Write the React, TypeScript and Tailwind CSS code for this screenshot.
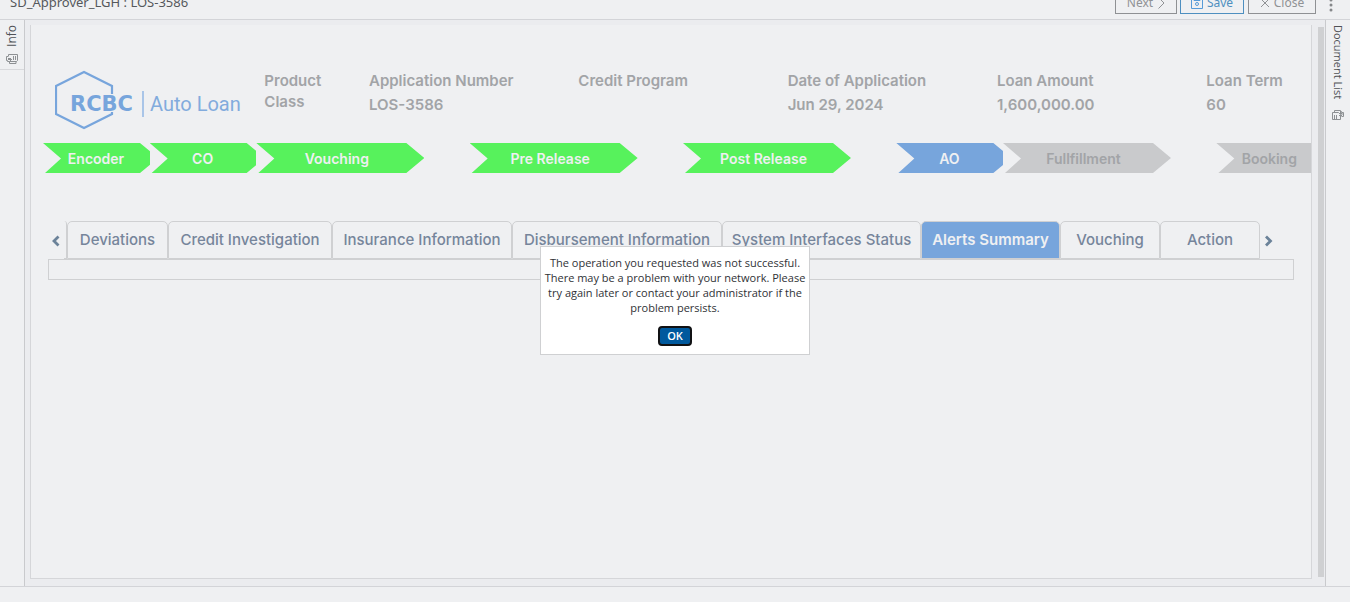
import type { ReactNode } from 'react';

type Tone = 'done' | 'current' | 'pending';

const stages: { label: string; tone: Tone; wide?: boolean }[] = [
  { label: 'Encoder', tone: 'done' },
  { label: 'CO', tone: 'done' },
  { label: 'Vouching', tone: 'done', wide: true },
  { label: 'Pre Release', tone: 'done', wide: true },
  { label: 'Post Release', tone: 'done', wide: true },
  { label: 'AO', tone: 'current' },
  { label: 'Fullfillment', tone: 'pending', wide: true },
  { label: 'Booking', tone: 'pending' },
];

const toneClass: Record<Tone, string> = {
  done: 'bg-[#57f25c] text-[#eff0f2]',
  current: 'bg-[#77a5dc] text-[#eff0f2]',
  pending: 'bg-[#c9cacc] text-[#a2a4a7]',
};

const tabs = [
  { label: 'Deviations', width: 'w-[101px]' },
  { label: 'Credit Investigation', width: 'w-[164px]' },
  { label: 'Insurance Information', width: 'w-[180px]' },
  { label: 'Disbursement Information', width: 'w-[210px]' },
  { label: 'System Interfaces Status', width: 'w-[199px]' },
  { label: 'Alerts Summary', width: 'w-[139px]', active: true },
  { label: 'Vouching', width: 'w-[100px]' },
  { label: 'Action', width: 'w-[100px]' },
];

const fields = [
  { label: 'Product Class', value: '', span: 'col-span-1' },
  { label: 'Application Number', value: 'LOS-3586', span: 'col-span-2' },
  { label: 'Credit Program', value: '', span: 'col-span-2' },
  { label: 'Date of Application', value: 'Jun 29, 2024', span: 'col-span-2' },
  { label: 'Loan Amount', value: '1,600,000.00', span: 'col-span-2' },
  { label: 'Loan Term', value: '60', span: 'col-span-1' },
];

function Logo() {
  return (
    <svg width="188" height="60" viewBox="0 0 188 60" role="img" aria-label="RCBC Auto Loan" className="block">
      <path
        d="M57 24V16L29 2L1 16V44L29 58L57 44V42"
        fill="none"
        stroke="#77a5dc"
        strokeWidth="2.2"
      />
      <text x="15" y="41" fontFamily="DejaVu Sans, sans-serif" fontWeight="700" fontSize="21" fill="#77a5dc">RCBC</text>
      <path d="M88 21V47" stroke="#a9c5e8" strokeWidth="2" />
      <text x="95" y="41" fontFamily="Roboto, sans-serif" fontSize="20" fill="#82abdd">Auto Loan</text>
    </svg>
  );
}

function InfoIcon() {
  return (
    <svg width="12" height="10" viewBox="0 0 12 10" fill="none" stroke="#8d9093" className="block">
      <path d="M2.5 2V.5h9v6l-1 1h-7M2.500 2.500h-2v4h1v1h2v2h6.500v-2" />
      <path d="M2 4.500h3M2 5.500h4M7.500 2v4M9.500 2v4M4.500 5v2" />
    </svg>
  );
}

function DocumentIcon() {
  return (
    <svg width="12" height="10" viewBox="0 0 12 10" fill="none" stroke="#8d9093" className="block">
      <path d="M2.5 2.500V.5h6v1h1v1h2v4h-2M.5 2.500h6l2 2v5h-8z" />
      <path d="M2.500 5v4M4.500 5v4M8.500 1v3h3M7 3.500h3M7 5.500h3" />
    </svg>
  );
}

function Arrow({ d, label }: { d: string; label: string }) {
  return (
    <button type="button" aria-label={label} className="flex h-10 w-4 items-center justify-center">
      <svg width="10" height="12" viewBox="0 0 10 12" fill="none" stroke="#6b8299" strokeWidth="2.8">
        <path d={d} />
      </svg>
    </button>
  );
}

function HeaderButton({ children, className }: { children: ReactNode; className: string }) {
  return (
    <button type="button" className={`flex h-[22px] shrink-0 items-center justify-center gap-1 border text-xs ${className}`}>
      {children}
    </button>
  );
}

export default function App() {
  return (
    <div className="flex min-h-screen flex-col overflow-hidden bg-[#eff0f2] font-['Open_Sans',sans-serif]">
      <header className="flex h-5 items-end border-b border-[#d3d4d8] pl-[10px] font-['Noto_Sans',sans-serif]">
        <h1 className="flex-1 pb-2 text-[13px] leading-[18px] text-[#55585c]">SD_Approver_LGH : LOS-3586</h1>
        <div className="flex items-end pb-[5px]">
          <HeaderButton className="mr-[3px] w-[62px] border-[#8f9194] text-[#909295]">
            Next
            <svg width="8" height="12" viewBox="0 0 8 12" fill="none" stroke="currentColor"><path d="M1.5 0.500L7 6L1.500 11.500" /></svg>
          </HeaderButton>
          <HeaderButton className="mr-1 w-16 border-[#4e8fc0] text-[#4e8fc0]">
            <svg width="12" height="12" viewBox="0 0 12 12" fill="none" stroke="#569bd8">
              <path d="M.5 .5h11v11H.5zM3 .5v3h6v-3" />
              <circle cx="6" cy="7" r="1.5" />
            </svg>
            Save
          </HeaderButton>
          <HeaderButton className="w-[68px] border-[#8f9194] text-[#909295]">
            <svg width="10" height="10" viewBox="0 0 10 10" fill="none" stroke="currentColor"><path d="M1 1l8 8M9 1L1 9" /></svg>
            Close
          </HeaderButton>
          <button type="button" aria-label="More actions" className="flex w-[34px] justify-center pr-1">
            <svg width="4" height="14" viewBox="0 0 4 14" fill="#85878a">
              <circle cx="2" cy="0" r="1.500" /><circle cx="2" cy="5" r="1.500" /><circle cx="2" cy="10" r="1.500" />
            </svg>
          </button>
        </div>
      </header>

      <div className="flex min-h-0 flex-1">
        <aside className="w-[25px] shrink-0 border-r border-[#c9cacd]">
          <button type="button" className="flex h-[50px] w-full flex-col items-center gap-[7px] border-b border-[#d8d9dc] pt-[5px]">
            <span className="rotate-180 text-xs leading-[14px] text-[#4f5256] [writing-mode:vertical-rl]">Info</span>
            <InfoIcon />
          </button>
        </aside>

        <main className="flex min-w-0 flex-1 bg-[#ebecef] pl-[5px]">
          <section className="mt-[5px] mb-[7px] min-w-0 flex-1 overflow-hidden border border-t-0 border-[#d5d6d9] bg-[#eff0f2] font-[Inter,sans-serif]">
            <dl className="ml-6 grid grid-cols-12 pt-[45px]">
              <div className="col-span-2"><Logo /></div>
              {fields.map((f) => (
                <div key={f.label} className={`${f.span} text-[15px] font-semibold text-[#a2a4a7]`}>
                  <dt className={f.value ? 'leading-[21px]' : 'pr-5 leading-[21px]'}>{f.label}</dt>
                  {f.value && <dd className="pt-[3px] leading-[21px]">{f.value}</dd>}
                </div>
              ))}
            </dl>

            <ol className="-mr-3 ml-3 grid grid-cols-12 pt-[13px]">
              {stages.map((s) => (
                <li key={s.label} className={s.wide ? 'col-span-2' : 'col-span-1 overflow-hidden'}>
                  <div
                    className={`flex h-[30px] items-center justify-center pt-px text-sm font-semibold [clip-path:polygon(0_0,calc(100%-18px)_0,100%_50%,calc(100%-18px)_100%,2px_100%,18px_52%)] ${toneClass[s.tone]} ${s.wide ? 'w-[168px] pr-[7px]' : 'w-[115px] pr-[9px]'}`}
                  >
                    {s.label}
                  </div>
                </li>
              ))}
            </ol>

            <div className="mt-12 mr-[17px] ml-[17px]">
              <nav className="flex h-[38px]" aria-label="Application sections">
                <Arrow label="Previous tabs" d="M7.500 1.500L3 6L7.500 10.500" />
                <div className="h-full w-[3px] rounded-tr border-r border-b border-[#cfd0d2]" />
                {tabs.map((t) => (
                  <button
                    key={t.label}
                    type="button"
                    aria-current={t.active ? 'page' : undefined}
                    className={`${t.width} shrink-0 rounded-t-[5px] border border-[#cfd0d2] text-[15px] whitespace-nowrap ${t.active ? 'bg-[#77a5dc] font-semibold text-[#eff0f2]' : 'font-medium text-[#76859b]'}`}
                  >
                    {t.label}
                  </button>
                ))}
                <Arrow label="Next tabs" d="M3 1.500L7.500 6L3 10.500" />
              </nav>
              <div className="h-[21px] border border-[#cfd0d2]" />
            </div>
          </section>
          <div className="mt-[7px] mr-[1px] mb-[9px] ml-[6px] w-[6px] bg-[#cfd0d2]" />
        </main>

        <aside className="w-[25px] shrink-0 border-l border-[#c9cacd]">
          <button type="button" className="flex w-full flex-col items-center gap-[11px] pt-[5px]">
            <span className="text-[11px] leading-[14px] text-[#4f5256] [writing-mode:vertical-rl]">Document List</span>
            <DocumentIcon />
          </button>
        </aside>
      </div>

      <footer className="h-4 border-t border-[#d3d4d8]" />

      <div className="pointer-events-none fixed inset-0 flex items-center justify-center pb-[2px]">
        <div
          role="alertdialog"
          aria-modal="true"
          aria-describedby="network-message"
          className="pointer-events-auto flex w-[270px] flex-col items-center border border-[#cfd0d2] bg-white px-[2px] pt-2 pb-2 text-center"
        >
          <p id="network-message" className="text-[11px] leading-[15px] text-[#303236]">
            The operation you requested was not successful. There may be a problem with your network. Please try again later or contact your administrator if the problem persists.
          </p>
          <button type="button" className="mt-[11px] h-5 w-[34px] rounded border-2 border-[#111214] bg-[#00599d] text-[11px] leading-4 font-semibold text-white">
            OK
          </button>
        </div>
      </div>
    </div>
  );
}
